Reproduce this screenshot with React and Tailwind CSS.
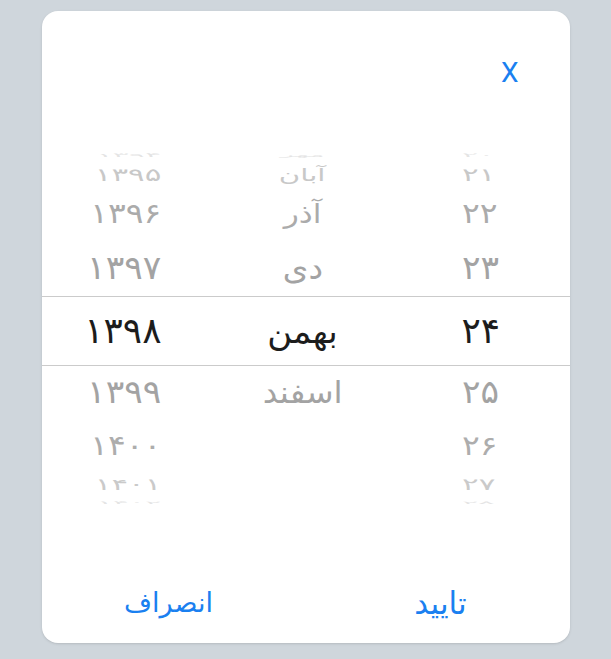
import React from "react";

const toFa = (n) => String(n).replace(/\d/g, (d) => "۰۱۲۳۴۵۶۷۸۹"[d]);

// wheel rows, from top to bottom; the 5th one is the selected row
const rows = [
  { year: 1394, month: "مهر", day: 20, h: "h-[14px]", tone: "text-[#e4e4e4]", scale: "scale-x-[0.84] scale-y-[0.14]" },
  { year: 1395, month: "آبان", day: 21, h: "h-[26px]", tone: "text-[#c8c8c8]", scale: "scale-x-[0.86] scale-y-[0.5]" },
  { year: 1396, month: "آذر", day: 22, h: "h-[52px]", tone: "text-[#ababab]", scale: "scale-x-[0.92] scale-y-[0.78]" },
  { year: 1397, month: "دی", day: 23, h: "h-[56px]", tone: "text-[#a3a3a3]", scale: "scale-x-[0.96] scale-y-[0.92]" },
  { year: 1398, month: "بهمن", day: 24, h: "h-[70px]", tone: "text-[#1c1c1c]", scale: "", selected: true },
  { year: 1399, month: "اسفند", day: 25, h: "h-[52px]", tone: "text-[#a3a3a3]", scale: "scale-x-[0.96] scale-y-[0.9]" },
  { year: 1400, month: "", day: 26, h: "h-[56px]", tone: "text-[#adadad]", scale: "scale-x-[0.92] scale-y-[0.76]" },
  { year: 1401, month: "", day: 27, h: "h-[22px]", tone: "text-[#cacaca]", scale: "scale-x-[0.86] scale-y-[0.45]" },
  { year: 1402, month: "", day: 28, h: "h-[14px]", tone: "text-[#e4e4e4]", scale: "scale-x-[0.84] scale-y-[0.12]" },
];

const fa = { fontFamily: '"DejaVu Sans", "Noto Sans", sans-serif' };

const PickerRow = ({ row }) => {
  return (
    <div
      className={`flex items-center ${row.h} ${row.tone} ${
        row.selected ? "border-y border-[#cbcbcb]" : ""
      } leading-none`}
      style={fa}
    >
      <div className="w-[176px] pr-[56px] flex justify-end text-[36px]">
        <span className={`inline-block origin-right ${row.scale}`}>{toFa(row.year)}</span>
      </div>
      <div className="w-[176px] flex justify-center pr-[6px] text-[34px]">
        <span className={`inline-block origin-center ${row.scale}`}>{row.month}</span>
      </div>
      <div className="w-[176px] pl-[68px] flex justify-start text-[36px]">
        <span className={`inline-block origin-left ${row.scale}`}>{toFa(row.day)}</span>
      </div>
    </div>
  );
};

const App = () => {
  return (
    <div className="h-screen w-full bg-[#cfd6dc] pt-[11px]">
      <div className="mx-auto w-[528px] h-[632px] bg-white rounded-2xl shadow-sm flex flex-col overflow-hidden">
        <div className="h-[137px] flex justify-end items-start pt-[46px] pr-[51px]">
          <button
            className="text-[28px] leading-8 text-[#1a80f0]"
            style={{ fontFamily: "Roboto, sans-serif" }}
          >
            X
          </button>
        </div>

        <div className="flex flex-col" dir="ltr">
          {rows.map((row) => (
            <PickerRow key={row.year} row={row} />
          ))}
        </div>

        <div className="flex-1" />

        <div className="h-[80px] flex items-center" dir="rtl" style={fa}>
          <button className="w-1/2 text-center text-[31px] text-[#1a80f0] pl-[6px]">تایید</button>
          <button className="w-1/2 text-center text-[27px] text-[#1a80f0] pr-[10px]">انصراف</button>
        </div>
      </div>
    </div>
  );
};

export default App;
